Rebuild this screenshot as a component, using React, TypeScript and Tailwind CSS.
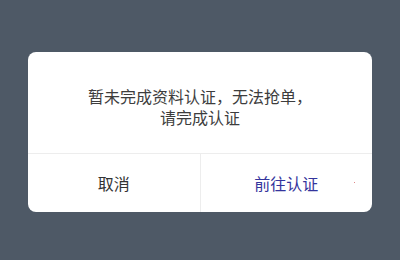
export default function App() {
  return (
    <div
      className="w-[400px] h-[260px] bg-[#4e5966] flex items-center justify-center pt-[4px]"
      style={{ fontFamily: '"Noto Sans CJK SC", "Noto Sans", sans-serif' }}
    >
      <div className="w-[344px] h-[160px] bg-white rounded-[8px] flex flex-col overflow-hidden">
        <div className="h-[101px] pt-[34px] text-center text-[16px] leading-[21px] text-[#3d3d3d]">
          <p>暂未完成资料认证，无法抢单，</p>
          <p>请完成认证</p>
        </div>
        <div className="flex flex-1 border-t border-[#ededed]">
          <button className="flex-1 flex items-center justify-center text-[16px] text-[#333]">取消</button>
          <div className="w-px bg-[#ededed]" />
          <button className="relative flex-1 flex items-center justify-center text-[16px] text-[#34349c]">
            前往认证
            <span className="absolute left-[153px] top-[28px] w-px h-px bg-[#d88]" />
          </button>
        </div>
      </div>
    </div>
  );
}
